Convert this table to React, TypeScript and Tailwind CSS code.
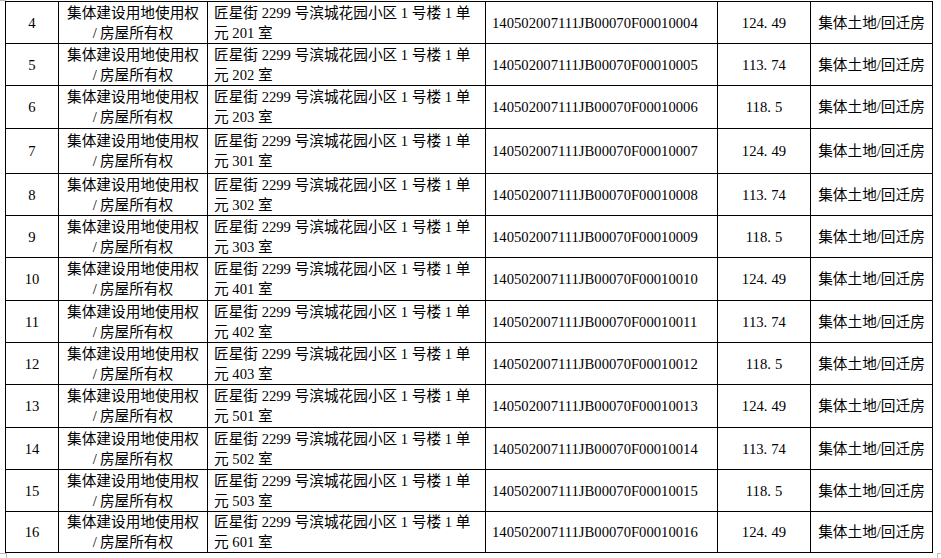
import React from "react";

type Row = { no: number; room: string; area: string; code: string; h: string };

const rows: Row[] = [
  { no: 4, room: "201", area: "124.49", code: "0004", h: "h-[42px]" },
  { no: 5, room: "202", area: "113.74", code: "0005", h: "h-[42px]" },
  { no: 6, room: "203", area: "118.5", code: "0006", h: "h-[43px]" },
  { no: 7, room: "301", area: "124.49", code: "0007", h: "h-[45px]" },
  { no: 8, room: "302", area: "113.74", code: "0008", h: "h-[42px]" },
  { no: 9, room: "303", area: "118.5", code: "0009", h: "h-[42px]" },
  { no: 10, room: "401", area: "124.49", code: "0010", h: "h-[43px]" },
  { no: 11, room: "402", area: "113.74", code: "0011", h: "h-[42px]" },
  { no: 12, room: "403", area: "118.5", code: "0012", h: "h-[42px]" },
  { no: 13, room: "501", area: "124.49", code: "0013", h: "h-[43px]" },
  { no: 14, room: "502", area: "113.74", code: "0014", h: "h-[42px]" },
  { no: 15, room: "503", area: "118.5", code: "0015", h: "h-[42px]" },
  { no: 16, room: "601", area: "124.49", code: "0016", h: "h-[41px]" },
];

const cell = "border border-black p-0 align-middle";

function Area({ value }: { value: string }) {
  const [a, b] = value.split(".");
  return (
    <>
      {a}
      <span className="pr-[4px]">.</span>
      {b}
    </>
  );
}

export default function App() {
  return (
    <div className="relative h-[558px] w-[941px] overflow-hidden bg-white font-['Liberation_Serif','Noto_Sans_CJK_SC',serif] text-[14.67px] leading-[20px] text-black">
      <div className="pl-[5px] pt-[1px]">
        <table className="w-[927px] table-fixed border-collapse">
          <colgroup>
            <col className="w-[53px]" />
            <col className="w-[149px]" />
            <col className="w-[278px]" />
            <col className="w-[232px]" />
            <col className="w-[93px]" />
            <col className="w-[122px]" />
          </colgroup>
          <tbody>
            {rows.map((r) => (
              <tr key={r.no} className={r.h}>
                <td className={`${cell} text-center`}>{r.no}</td>
                <td className={`${cell} text-center`}>
                  <div>集体建设用地使用权</div>
                  <div>
                    <span className="pr-[3px]">/</span>房屋所有权
                  </div>
                </td>
                <td className={`${cell} pl-[6px] text-left`}>
                  <div>匠星街 2299 号滨城花园小区 1 号楼 1 单</div>
                  <div>元 {r.room} 室</div>
                </td>
                <td className={`${cell} pl-[6px] text-left`}>
                  140502007111JB00070F0001{r.code}
                </td>
                <td className={`${cell} text-center`}>
                  <Area value={r.area} />
                </td>
                <td className={`${cell} text-center`}>集体土地/回迁房</td>
              </tr>
            ))}
          </tbody>
        </table>
      </div>

      {/* page margin marks */}
      <div className="absolute left-0 top-0 h-px w-[6px] bg-[#bdbdbd]" />
      <div className="absolute left-0 top-[553px] h-[5px] w-[7px] border-r border-t border-[#bdbdbd]" />
      <div className="absolute left-[937px] top-[553px] h-[5px] w-[4px] border-l border-t border-[#bdbdbd]" />
    </div>
  );
}
